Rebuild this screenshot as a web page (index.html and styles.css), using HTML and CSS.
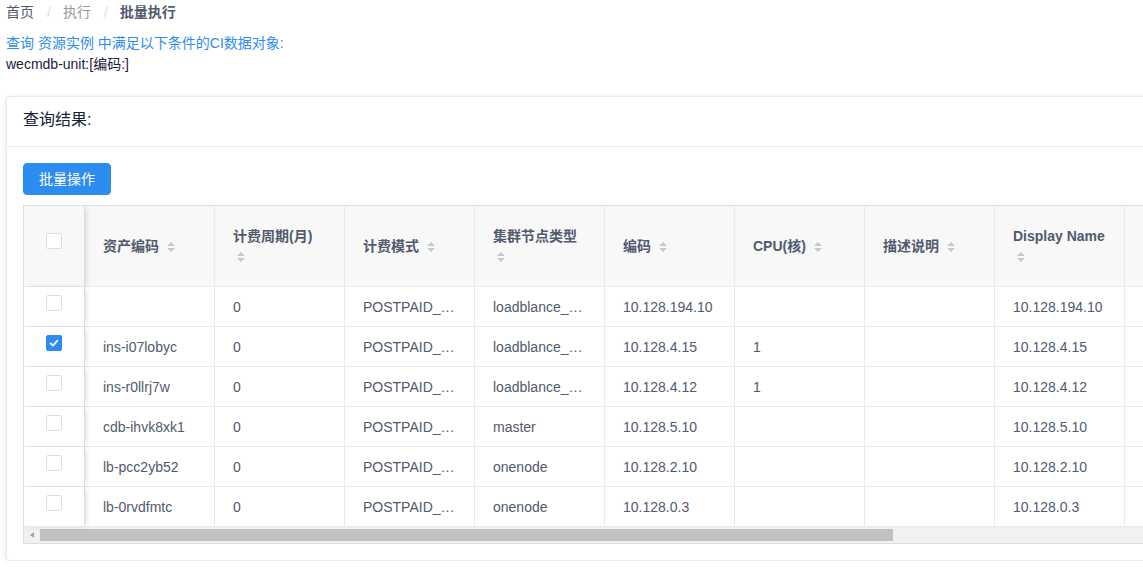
FILE: index.html
```html
<!DOCTYPE html>
<html lang="zh-CN">
<head>
<meta charset="utf-8">
<title>批量执行</title>
<link rel="stylesheet" href="styles.css">
</head>
<body>
<div class="page">
  <div class="breadcrumb">
    <span class="bc-item bc-home">首页</span><span class="bc-sep">/</span><span class="bc-item bc-link">执行</span><span class="bc-sep">/</span><span class="bc-item bc-current">批量执行</span>
  </div>
  <div class="query-desc">查询 资源实例 中满足以下条件的CI数据对象:</div>
  <div class="query-cond">wecmdb-unit:[编码:]</div>

  <div class="card">
    <div class="card-head">查询结果:</div>
    <div class="card-body">
      <button class="btn-primary" type="button">批量操作</button>
      <div class="table-wrap">
        <table class="tbl">
          <colgroup>
            <col class="c-check">
            <col class="c-col"><col class="c-col"><col class="c-col"><col class="c-col"><col class="c-col"><col class="c-col"><col class="c-col"><col class="c-col"><col class="c-col"><col class="c-col">
          </colgroup>
          <thead>
            <tr>
              <th class="fixed chk-cell"><span class="checkbox"></span></th>
              <th><span class="th-text">资产编码</span> <span class="sort"></span></th>
              <th><span class="th-text">计费周期(月)</span> <span class="sort"></span></th>
              <th><span class="th-text">计费模式</span> <span class="sort"></span></th>
              <th><span class="th-text">集群节点类型</span> <span class="sort"></span></th>
              <th><span class="th-text">编码</span> <span class="sort"></span></th>
              <th><span class="th-text">CPU(核)</span> <span class="sort"></span></th>
              <th><span class="th-text">描述说明</span> <span class="sort"></span></th>
              <th><span class="th-text">Display Name</span> <span class="sort"></span></th>
              <th></th>
              <th></th>
            </tr>
          </thead>
          <tbody>
            <tr>
              <td class="fixed chk-cell"><span class="checkbox"></span></td>
              <td><div class="cell"></div></td>
              <td><div class="cell">0</div></td>
              <td><div class="cell">POSTPAID_BY_HOUR</div></td>
              <td><div class="cell">loadblance_node</div></td>
              <td><div class="cell">10.128.194.10</div></td>
              <td><div class="cell"></div></td>
              <td><div class="cell"></div></td>
              <td><div class="cell">10.128.194.10</div></td>
              <td></td><td></td>
            </tr>
            <tr>
              <td class="fixed chk-cell"><span class="checkbox checked"><svg viewBox="0 0 16 16" width="16" height="16"><path d="M4.6 8.3 L7 10.6 L11.4 5.6" fill="none" stroke="#fff" stroke-width="1.8" stroke-linecap="round" stroke-linejoin="round"/></svg></span></td>
              <td><div class="cell">ins-i07lobyc</div></td>
              <td><div class="cell">0</div></td>
              <td><div class="cell">POSTPAID_BY_HOUR</div></td>
              <td><div class="cell">loadblance_node</div></td>
              <td><div class="cell">10.128.4.15</div></td>
              <td><div class="cell">1</div></td>
              <td><div class="cell"></div></td>
              <td><div class="cell">10.128.4.15</div></td>
              <td></td><td></td>
            </tr>
            <tr>
              <td class="fixed chk-cell"><span class="checkbox"></span></td>
              <td><div class="cell">ins-r0llrj7w</div></td>
              <td><div class="cell">0</div></td>
              <td><div class="cell">POSTPAID_BY_HOUR</div></td>
              <td><div class="cell">loadblance_node</div></td>
              <td><div class="cell">10.128.4.12</div></td>
              <td><div class="cell">1</div></td>
              <td><div class="cell"></div></td>
              <td><div class="cell">10.128.4.12</div></td>
              <td></td><td></td>
            </tr>
            <tr>
              <td class="fixed chk-cell"><span class="checkbox"></span></td>
              <td><div class="cell">cdb-ihvk8xk1</div></td>
              <td><div class="cell">0</div></td>
              <td><div class="cell">POSTPAID_BY_HOUR</div></td>
              <td><div class="cell">master</div></td>
              <td><div class="cell">10.128.5.10</div></td>
              <td><div class="cell"></div></td>
              <td><div class="cell"></div></td>
              <td><div class="cell">10.128.5.10</div></td>
              <td></td><td></td>
            </tr>
            <tr>
              <td class="fixed chk-cell"><span class="checkbox"></span></td>
              <td><div class="cell">lb-pcc2yb52</div></td>
              <td><div class="cell">0</div></td>
              <td><div class="cell">POSTPAID_BY_HOUR</div></td>
              <td><div class="cell">onenode</div></td>
              <td><div class="cell">10.128.2.10</div></td>
              <td><div class="cell"></div></td>
              <td><div class="cell"></div></td>
              <td><div class="cell">10.128.2.10</div></td>
              <td></td><td></td>
            </tr>
            <tr>
              <td class="fixed chk-cell"><span class="checkbox"></span></td>
              <td><div class="cell">lb-0rvdfmtc</div></td>
              <td><div class="cell">0</div></td>
              <td><div class="cell">POSTPAID_BY_HOUR</div></td>
              <td><div class="cell">onenode</div></td>
              <td><div class="cell">10.128.0.3</div></td>
              <td><div class="cell"></div></td>
              <td><div class="cell"></div></td>
              <td><div class="cell">10.128.0.3</div></td>
              <td></td><td></td>
            </tr>
          </tbody>
        </table>
        <div class="hscroll">
          <div class="hs-arrow"><span class="hs-tri"></span></div>
          <div class="hs-thumb"></div>
        </div>
      </div>
    </div>
  </div>
</div>
</body>
</html>
```

FILE: styles.css
```css
* { box-sizing: border-box; }

html, body {
  margin: 0;
  padding: 0;
  overflow: hidden;
  background: #fff;
}

body {
  font-family: "Liberation Sans", Arial, "Noto Sans CJK SC", sans-serif;
  font-size: 14px;
  color: #515a6e;
}

.page {
  padding: 0 0 0 6px;
  width: 1500px;
}

.breadcrumb {
  line-height: 24px;
  height: 24px;
  white-space: nowrap;
}
.bc-home { color: #515a6e; }
.bc-link { color: #999; }
.bc-current { color: #515a6e; font-weight: bold; }
.bc-sep {
  color: #dcdee2;
  margin: 0 12px 0 13px;
}

.query-desc {
  margin-top: 9px;
  line-height: 21px;
  color: #2d8cf0;
}
.query-cond {
  line-height: 21px;
  color: #17233d;
}

.card {
  margin-top: 21px;
  width: 1420px;
  background: #fff;
  border: 1px solid #e8eaec;
  border-radius: 4px;
  box-shadow: 0 1px 5px rgba(0, 0, 0, 0.12);
}

.card-head {
  padding: 12px 16px 16px;
  line-height: 21px;
  font-size: 16px;
  color: #17233d;
  border-bottom: 1px solid #e8eaec;
}

.card-body {
  padding: 16px;
}

.btn-primary {
  display: block;
  height: 32px;
  padding: 0 15px;
  border: 1px solid #2d8cf0;
  border-radius: 4px;
  background: #2d8cf0;
  color: #fff;
  font-family: inherit;
  font-size: 14px;
  line-height: 30px;
  margin-bottom: 10px;
}

.table-wrap {
  border: 1px solid #dcdee2;
  border-right: none;
  overflow: hidden;
  width: 1386px;
}

.tbl {
  border-collapse: separate;
  border-spacing: 0;
  table-layout: fixed;
  width: 1361px;
}

.c-check { width: 61px; }
.c-col { width: 130px; }

.tbl th,
.tbl td {
  border-right: 1px solid #e8eaec;
  border-bottom: 1px solid #e8eaec;
  padding: 0 18px;
  vertical-align: middle;
  text-align: left;
}

.tbl th {
  height: 81px;
  background: #f8f8f9;
  font-weight: bold;
  color: #515a6e;
  line-height: 20px;
}

.tbl td {
  height: 40px;
  background: #fff;
  line-height: 20px;
}

.tbl .fixed {
  position: relative;
  z-index: 1;
  border-right-color: #dcdee2;
  box-shadow: 2px 0 6px -2px rgba(0, 0, 0, 0.2);
  text-align: center;
  padding: 0 0 8px 0;
}
.tbl th.fixed {
  padding-bottom: 10px;
}

.cell {
  white-space: nowrap;
  overflow: hidden;
  text-overflow: ellipsis;
}

.th-text { }

.sort {
  display: inline-block;
  width: 8px;
  height: 10px;
  margin-left: 4px;
  vertical-align: -1px;
  position: relative;
}
.sort::before,
.sort::after {
  content: "";
  position: absolute;
  left: 0;
  border-left: 4px solid transparent;
  border-right: 4px solid transparent;
}
.sort::before {
  top: 0;
  border-bottom: 4px solid #c5c8ce;
}
.sort::after {
  bottom: 0;
  border-top: 4px solid #c5c8ce;
}

.checkbox {
  display: block;
  margin: 0 auto;
  width: 16px;
  height: 16px;
  border: 1px solid #dcdee2;
  border-radius: 2px;
  background: #fff;
  overflow: hidden;
}
.checkbox.checked {
  background: #2d8cf0;
  border-color: #2d8cf0;
}
.checkbox svg {
  display: block;
  margin: -1px 0 0 -1px;
}

.hscroll {
  display: flex;
  align-items: center;
  height: 16px;
  background: #f1f1f1;
}
.hs-arrow {
  width: 16px;
  height: 16px;
  display: flex;
  align-items: center;
  justify-content: center;
}
.hs-tri {
  width: 0;
  height: 0;
  border-top: 3.5px solid transparent;
  border-bottom: 3.5px solid transparent;
  border-right: 4px solid #a3a3a3;
}
.hs-thumb {
  width: 853px;
  height: 12px;
  background: #c1c1c1;
}
```
